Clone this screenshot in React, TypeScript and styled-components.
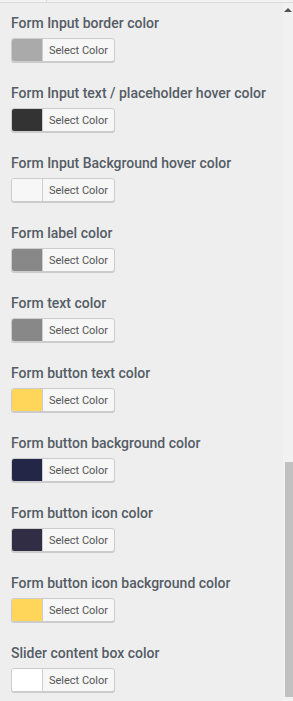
import React from 'react';
import styled, { createGlobalStyle } from 'styled-components';

const GlobalStyle = createGlobalStyle`
    html, body {
        margin: 0;
        padding: 0;
        background: #eeeeee;
        font-family: Roboto, "Liberation Sans", Arial, sans-serif;
    }
`;

const Page = styled.div`
    width: 293px;
    height: 701px;
    display: flex;
    flex-direction: column;
    overflow: hidden;
    background: #eeeeee;
`;

const TabStrip = styled.div`
    display: flex;
    height: 2px;
    flex-shrink: 0;
    background: #f2f2f2;
    border-bottom: 1px solid #dcdcdc;
`;

const Tab = styled.div<{ $width?: number }>`
    width: ${props => (props.$width ? `${props.$width}px` : 'auto')};
    flex: ${props => (props.$width ? '0 0 auto' : '1')};
    border-right: ${props => (props.$width ? '1px solid #dcdcdc' : 'none')};
`;

const Body = styled.div`
    flex: 1;
    display: flex;
    min-height: 0;
`;

const Content = styled.div`
    flex: 1;
    padding: 11px 0 0 11px;
    display: flex;
    flex-direction: column;
    gap: 22px;
`;

const Field = styled.div`
    display: flex;
    flex-direction: column;
    align-items: flex-start;
`;

const Label = styled.span`
    font-size: 14px;
    line-height: 18px;
    font-weight: 500;
    color: #555d66;
    margin-bottom: 6px;
    white-space: nowrap;
`;

const ColorButton = styled.button`
    display: flex;
    align-items: stretch;
    height: 24px;
    width: 104px;
    margin: 0;
    padding: 0;
    box-sizing: border-box;
    border: 1px solid #cccccc;
    border-radius: 3px;
    background: #f7f7f7;
    box-shadow: 0 1px 0 #cccccc;
    overflow: hidden;
    cursor: pointer;
`;

const Swatch = styled.span<{ $color: string }>`
    width: 30px;
    background: ${props => props.$color};
    border-right: 1px solid #cccccc;
`;

const ButtonText = styled.span`
    flex: 1;
    display: flex;
    align-items: center;
    justify-content: center;
    font-family: Roboto, "Liberation Sans", Arial, sans-serif;
    font-size: 11px;
    color: #555555;
`;

const ScrollTrack = styled.div`
    width: 10px;
    flex-shrink: 0;
    display: flex;
    flex-direction: column;
    align-items: flex-end;
    background: #f1f1f1;
`;

const ArrowUp = styled.div`
    width: 0;
    height: 0;
    margin: 5px 1px 0 0;
    border-left: 4px solid transparent;
    border-right: 4px solid transparent;
    border-bottom: 4px solid #505050;
`;

const Thumb = styled.div`
    width: 8px;
    height: 235px;
    margin-top: 450px;
    background: #c1c1c1;
`;

const fields = [
    { label: 'Form Input border color', color: '#aaaaaa' },
    { label: 'Form Input text / placeholder hover color', color: '#333333' },
    { label: 'Form Input Background hover color', color: '#f7f7f7' },
    { label: 'Form label color', color: '#888888' },
    { label: 'Form text color', color: '#888888' },
    { label: 'Form button text color', color: '#ffd65a' },
    { label: 'Form button background color', color: '#232646' },
    { label: 'Form button icon color', color: '#302d44' },
    { label: 'Form button icon background color', color: '#ffd65a' },
    { label: 'Slider content box color', color: '#ffffff' },
];

const App = () => (
    <Page>
        <GlobalStyle />
        <TabStrip>
            <Tab $width={46} />
            <Tab />
        </TabStrip>
        <Body>
            <Content>
                {fields.map(field => (
                    <Field key={field.label}>
                        <Label>{field.label}</Label>
                        <ColorButton type="button">
                            <Swatch $color={field.color} />
                            <ButtonText>Select Color</ButtonText>
                        </ColorButton>
                    </Field>
                ))}
            </Content>
            <ScrollTrack>
                <ArrowUp />
                <Thumb />
            </ScrollTrack>
        </Body>
    </Page>
);

export default App;
